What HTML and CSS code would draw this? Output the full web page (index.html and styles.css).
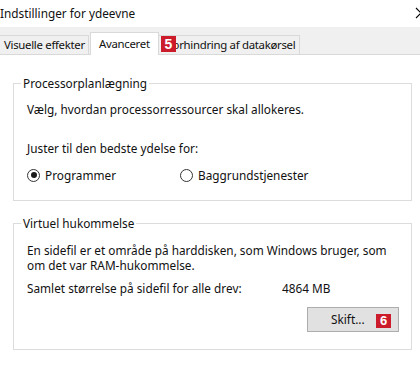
FILE: index.html
```html
<!DOCTYPE html>
<html lang="da">
<head>
<meta charset="utf-8">
<title>Indstillinger for ydeevne</title>
<link rel="stylesheet" href="styles.css">
</head>
<body>
<div class="window">
  <div class="titlebar">
    <span class="title">Indstillinger for ydeevne</span>
    <svg class="close" width="12" height="12" viewBox="0 0 12 12"><path d="M1 1 L11 11 M11 1 L1 11" stroke="#000" stroke-width="1.1" fill="none"/></svg>
  </div>
  <div class="tabstrip">
    <div class="tab tab-first">Visuelle effekter</div>
    <div class="tab tab-active">Avanceret<span class="badge badge-tab">5</span></div>
    <div class="tab tab-last">Forhindring af datakørsel</div>
  </div>
  <div class="panel">
    <fieldset class="group group-cpu">
      <legend>Processorplanlægning</legend>
      <p class="line line-first">Vælg, hvordan processorressourcer skal allokeres.</p>
      <p class="line line-juster">Juster til den bedste ydelse for:</p>
      <div class="radios">
        <label class="radio"><span class="dot checked"></span>Programmer</label>
        <label class="radio radio-second"><span class="dot"></span>Baggrundstjenester</label>
      </div>
    </fieldset>
    <fieldset class="group group-vm">
      <legend>Virtuel hukommelse</legend>
      <p class="para">En sidefil er et område på harddisken, som Windows bruger, som om det var RAM-hukommelse.</p>
      <div class="total"><span class="total-label">Samlet størrelse på sidefil for alle drev:</span><span class="total-value">4864 MB</span></div>
      <div class="btnrow">
        <div class="button">Skift...<span class="badge badge-btn">6</span></div>
      </div>
    </fieldset>
  </div>
</div>
</body>
</html>
```
FILE: styles.css
```css
html, body {
  margin: 0;
  padding: 0;
  background: #ffffff;
}
body {
  font-family: "Noto Sans", "Open Sans", sans-serif;
  font-size: 11.8px;
  color: #111111;
  width: 420px;
  height: 365px;
  overflow: hidden;
}
.window {
  width: 420px;
  height: 365px;
  overflow: hidden;
  position: relative;
}
.titlebar {
  height: 27px;
  display: flex;
  align-items: center;
  justify-content: space-between;
  background: #ffffff;
}
.title {
  font-size: 11.8px;
  margin-left: 0;
  margin-top: -2px;
}
.close {
  margin-right: -7px;
  margin-top: -1px;
}
.tabstrip {
  height: 28px;
  background: #f0f0f0;
  display: flex;
  align-items: flex-end;
  border-bottom: 1px solid #d9d9d9;
  box-sizing: border-box;
}
.tab {
  height: 18px;
  line-height: 17px;
  border: 1px solid #d9d9d9;
  border-bottom: none;
  background: #f0f0f0;
  font-size: 11.4px;
  letter-spacing: -0.3px;
  white-space: nowrap;
}
.tab-first {
  width: 84px;
  margin-left: -1px;
  padding-left: 4px;
}
.tab-active {
  position: relative;
  background: #ffffff;
  height: 22px;
  line-height: 21px;
  margin-bottom: -1px;
  margin-left: 1px;
  padding-left: 8px;
  width: 59px;
  z-index: 1;
}
.tab-last {
  margin-left: -1px;
  padding-left: 8px;
  padding-right: 4px;
}
.badge {
  position: absolute;
  background: #cc1b2b;
  color: #ffffff;
  font-weight: 700;
  font-family: "Liberation Sans", sans-serif;
  text-align: center;
  letter-spacing: 0;
}
.badge-tab {
  left: 70px;
  top: 3px;
  width: 15px;
  height: 16px;
  line-height: 16px;
  font-size: 14px;
}
.panel {
  padding-top: 20px;
}
.group {
  margin: 0 8px 0 13px;
  border: 1px solid #dcdcdc;
  padding: 0 0 0 13px;
  min-width: 0;
}
.group legend {
  margin-left: -6px;
  padding: 0 2px;
  line-height: 16px;
}
.line {
  margin: 0;
  line-height: 16px;
}
.group-cpu {
  height: 124px;
}
.line-first {
  margin-top: 10px;
}
.line-juster {
  margin-top: 23px;
}
.radios {
  display: flex;
  margin-top: 11px;
}
.radio {
  display: flex;
  align-items: center;
  gap: 5px;
  width: 153px;
}
.dot {
  width: 11px;
  height: 11px;
  border: 1px solid #333;
  border-radius: 50%;
  position: relative;
  box-sizing: content-box;
}
.dot.checked::after {
  content: "";
  position: absolute;
  left: 2.5px;
  top: 2.5px;
  width: 6px;
  height: 6px;
  border-radius: 50%;
  background: #1a1a1a;
}
.group-vm {
  margin-top: 14px;
  height: 133px;
}
.para {
  margin: 12px 0 0 0;
  width: 372px;
  line-height: 15px;
}
.total {
  display: flex;
  margin-top: 7px;
  line-height: 16px;
}
.total-label {
  width: 255px;
}
.btnrow {
  display: flex;
  justify-content: flex-end;
  margin-top: 11px;
  padding-right: 12px;
}
.button {
  position: relative;
  width: 90px;
  height: 23px;
  background: #e1e1e1;
  border: 1px solid #adadad;
  line-height: 23px;
  text-indent: 23px;
}
.badge-btn {
  left: 68px;
  top: 6px;
  width: 15px;
  height: 14px;
  line-height: 14px;
  font-size: 13px;
  text-indent: 0;
}
```
